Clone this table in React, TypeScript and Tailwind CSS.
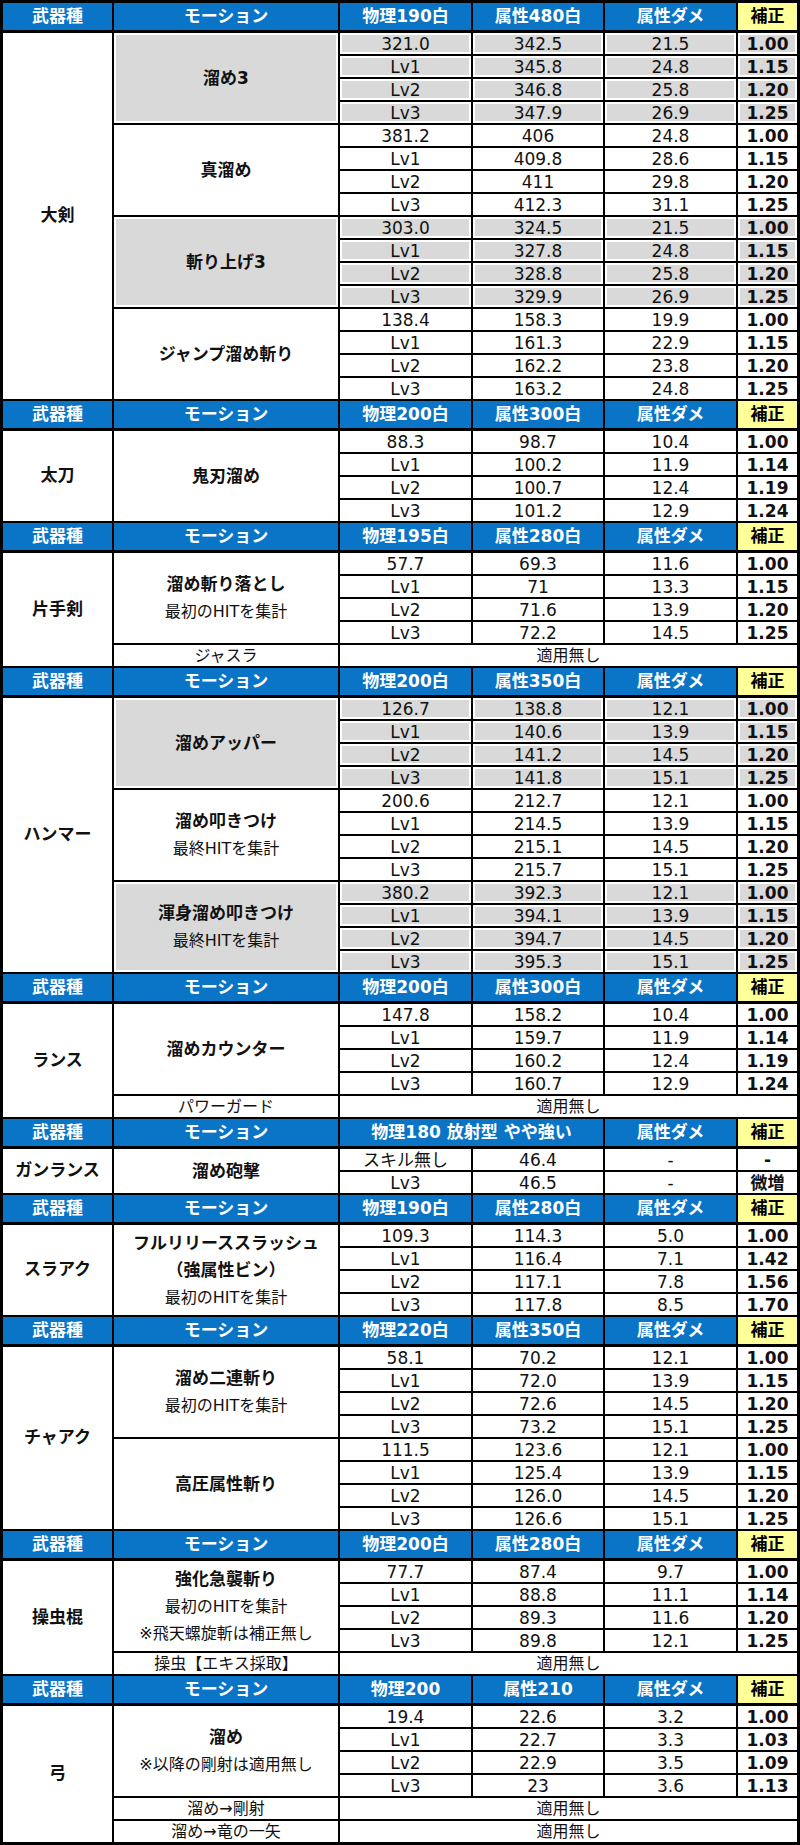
import { Fragment } from "react";

type Line = { t: string; b?: boolean };
type Group = { lines: Line[]; gray?: boolean; rows: string[][] };
type Section = { weapon: string; heads: string[]; groups: Group[]; extras?: [string, string][] };

const lv = (base: string[], l1: string[], l2: string[], l3: string[]) => [base, ["Lv1", ...l1], ["Lv2", ...l2], ["Lv3", ...l3]];

const sections: Section[] = [
    {
        weapon: "大剣",
        heads: ["物理190白", "属性480白"],
        groups: [
            { lines: [{ t: "溜め3", b: true }], gray: true, rows: lv(["321.0", "342.5", "21.5", "1.00"], ["345.8", "24.8", "1.15"], ["346.8", "25.8", "1.20"], ["347.9", "26.9", "1.25"]) },
            { lines: [{ t: "真溜め", b: true }], rows: lv(["381.2", "406", "24.8", "1.00"], ["409.8", "28.6", "1.15"], ["411", "29.8", "1.20"], ["412.3", "31.1", "1.25"]) },
            { lines: [{ t: "斬り上げ3", b: true }], gray: true, rows: lv(["303.0", "324.5", "21.5", "1.00"], ["327.8", "24.8", "1.15"], ["328.8", "25.8", "1.20"], ["329.9", "26.9", "1.25"]) },
            { lines: [{ t: "ジャンプ溜め斬り", b: true }], rows: lv(["138.4", "158.3", "19.9", "1.00"], ["161.3", "22.9", "1.15"], ["162.2", "23.8", "1.20"], ["163.2", "24.8", "1.25"]) },
        ],
    },
    {
        weapon: "太刀",
        heads: ["物理200白", "属性300白"],
        groups: [
            { lines: [{ t: "鬼刃溜め", b: true }], rows: lv(["88.3", "98.7", "10.4", "1.00"], ["100.2", "11.9", "1.14"], ["100.7", "12.4", "1.19"], ["101.2", "12.9", "1.24"]) },
        ],
    },
    {
        weapon: "片手剣",
        heads: ["物理195白", "属性280白"],
        groups: [
            { lines: [{ t: "溜め斬り落とし", b: true }, { t: "最初のHITを集計" }], rows: lv(["57.7", "69.3", "11.6", "1.00"], ["71", "13.3", "1.15"], ["71.6", "13.9", "1.20"], ["72.2", "14.5", "1.25"]) },
        ],
        extras: [["ジャスラ", "適用無し"]],
    },
    {
        weapon: "ハンマー",
        heads: ["物理200白", "属性350白"],
        groups: [
            { lines: [{ t: "溜めアッパー", b: true }], gray: true, rows: lv(["126.7", "138.8", "12.1", "1.00"], ["140.6", "13.9", "1.15"], ["141.2", "14.5", "1.20"], ["141.8", "15.1", "1.25"]) },
            { lines: [{ t: "溜め叩きつけ", b: true }, { t: "最終HITを集計" }], rows: lv(["200.6", "212.7", "12.1", "1.00"], ["214.5", "13.9", "1.15"], ["215.1", "14.5", "1.20"], ["215.7", "15.1", "1.25"]) },
            { lines: [{ t: "渾身溜め叩きつけ", b: true }, { t: "最終HITを集計" }], gray: true, rows: lv(["380.2", "392.3", "12.1", "1.00"], ["394.1", "13.9", "1.15"], ["394.7", "14.5", "1.20"], ["395.3", "15.1", "1.25"]) },
        ],
    },
    {
        weapon: "ランス",
        heads: ["物理200白", "属性300白"],
        groups: [
            { lines: [{ t: "溜めカウンター", b: true }], rows: lv(["147.8", "158.2", "10.4", "1.00"], ["159.7", "11.9", "1.14"], ["160.2", "12.4", "1.19"], ["160.7", "12.9", "1.24"]) },
        ],
        extras: [["パワーガード", "適用無し"]],
    },
    {
        weapon: "ガンランス",
        heads: ["物理180 放射型 やや強い"],
        groups: [
            { lines: [{ t: "溜め砲撃", b: true }], rows: [["スキル無し", "46.4", "-", "-"], ["Lv3", "46.5", "-", "微増"]] },
        ],
    },
    {
        weapon: "スラアク",
        heads: ["物理190白", "属性280白"],
        groups: [
            { lines: [{ t: "フルリリーススラッシュ", b: true }, { t: "（強属性ビン）", b: true }, { t: "最初のHITを集計" }], rows: lv(["109.3", "114.3", "5.0", "1.00"], ["116.4", "7.1", "1.42"], ["117.1", "7.8", "1.56"], ["117.8", "8.5", "1.70"]) },
        ],
    },
    {
        weapon: "チャアク",
        heads: ["物理220白", "属性350白"],
        groups: [
            { lines: [{ t: "溜め二連斬り", b: true }, { t: "最初のHITを集計" }], rows: lv(["58.1", "70.2", "12.1", "1.00"], ["72.0", "13.9", "1.15"], ["72.6", "14.5", "1.20"], ["73.2", "15.1", "1.25"]) },
            { lines: [{ t: "高圧属性斬り", b: true }], rows: lv(["111.5", "123.6", "12.1", "1.00"], ["125.4", "13.9", "1.15"], ["126.0", "14.5", "1.20"], ["126.6", "15.1", "1.25"]) },
        ],
    },
    {
        weapon: "操虫棍",
        heads: ["物理200白", "属性280白"],
        groups: [
            { lines: [{ t: "強化急襲斬り", b: true }, { t: "最初のHITを集計" }, { t: "※飛天螺旋斬は補正無し" }], rows: lv(["77.7", "87.4", "9.7", "1.00"], ["88.8", "11.1", "1.14"], ["89.3", "11.6", "1.20"], ["89.8", "12.1", "1.25"]) },
        ],
        extras: [["操虫【エキス採取】", "適用無し"]],
    },
    {
        weapon: "弓",
        heads: ["物理200", "属性210"],
        groups: [
            { lines: [{ t: "溜め", b: true }, { t: "※以降の剛射は適用無し" }], rows: lv(["19.4", "22.6", "3.2", "1.00"], ["22.7", "3.3", "1.03"], ["22.9", "3.5", "1.09"], ["23", "3.6", "1.13"]) },
        ],
        extras: [["溜め→剛射", "適用無し"], ["溜め→竜の一矢", "適用無し"]],
    },
];

const rowSpan: Record<number, string> = {
    2: "row-span-2",
    4: "row-span-4",
    5: "row-span-5",
    6: "row-span-6",
    8: "row-span-8",
    12: "row-span-12",
    16: "row-span-16",
};

const cell = "flex items-center justify-center text-center border-b-2 border-black";
const gray = "bg-[#d9d9d9] shadow-[inset_0_0_0_2px_#fff]";
const head = "flex items-center justify-center border-b-[3px] border-r-2 border-black bg-[#0a74c6] text-white font-bold text-[17px]";

function WeaponSection({ s }: { s: Section }) {
    const total = s.groups.reduce((n, g) => n + g.rows.length, 0) + (s.extras?.length ?? 0);
    return (
        <div className="grid grid-cols-[111px_226px_133px_132px_133px_59px] grid-rows-[30px] auto-rows-[23px]">
            <div className={head}>武器種</div>
            <div className={head}>モーション</div>
            {s.heads.length === 1 ? (
                <div className={`${head} col-span-2`}>{s.heads[0]}</div>
            ) : (
                s.heads.map(h => <div key={h} className={head}>{h}</div>)
            )}
            <div className={head}>属性ダメ</div>
            <div className="flex items-center justify-center border-b-[3px] border-black bg-[#ffff99] text-black font-bold text-[17px]">補正</div>

            <div className={`${rowSpan[total]} ${cell} border-r-2 font-bold text-[17px]`}>{s.weapon}</div>

            {s.groups.map((g, gi) => (
                <Fragment key={gi}>
                    <div className={`${rowSpan[g.rows.length]} ${cell} border-r-2 flex-col leading-[27px] ${g.gray ? gray : ""}`}>
                        {g.lines.map(l => (
                            <span key={l.t} className={l.b ? "font-bold text-[17px]" : "text-[16px]"}>{l.t}</span>
                        ))}
                    </div>
                    {g.rows.map((r, ri) =>
                        r.map((v, ci) => (
                            <div
                                key={`${ri}-${ci}`}
                                className={`${cell} pt-[2px] text-[17px] ${ci < 3 ? "border-r-2" : "font-bold"} ${g.gray ? gray : ""}`}
                            >
                                {v}
                            </div>
                        ))
                    )}
                </Fragment>
            ))}

            {s.extras?.map(([name, val]) => (
                <Fragment key={name}>
                    <div className={`${cell} border-r-2 text-[16px]`}>{name}</div>
                    <div className={`${cell} col-span-4 text-[16px]`}>{val}</div>
                </Fragment>
            ))}
        </div>
    );
}

export default function App() {
    return (
        <div className="w-[800px] bg-white border-t-[3px] border-x-[3px] border-b border-black text-[#111] font-['DejaVu_Sans','Noto_Sans_CJK_JP',sans-serif]">
            {sections.map(s => (
                <WeaponSection key={s.weapon} s={s} />
            ))}
        </div>
    );
}
